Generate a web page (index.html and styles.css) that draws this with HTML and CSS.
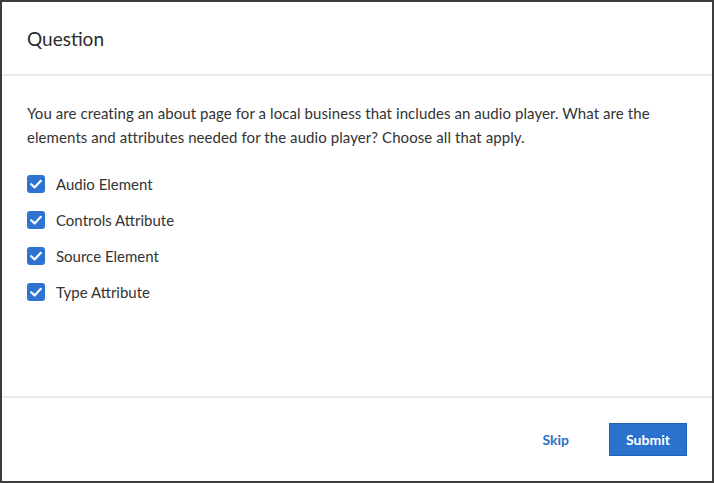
FILE: index.html
```html
<!DOCTYPE html>
<html>
<head>
<meta charset="utf-8">
<link rel="stylesheet" href="styles.css">
</head>
<body>
<div class="dialog">
  <div class="header"><h1 class="title">Question</h1></div>
  <div class="content">
    <p class="prompt">You are creating an about page for a local business that includes an audio player. What are the elements and attributes needed for the audio player? Choose all that apply.</p>
    <ul class="options">
      <li class="option"><span class="box"><svg viewBox="0 0 18 18" width="18" height="18"><path d="M4.2 9.2 L7.6 12.4 L13.8 5.8" fill="none" stroke="#fff" stroke-width="2.2" stroke-linecap="round" stroke-linejoin="round"/></svg></span><span class="label">Audio Element</span></li>
      <li class="option"><span class="box"><svg viewBox="0 0 18 18" width="18" height="18"><path d="M4.2 9.2 L7.6 12.4 L13.8 5.8" fill="none" stroke="#fff" stroke-width="2.2" stroke-linecap="round" stroke-linejoin="round"/></svg></span><span class="label">Controls Attribute</span></li>
      <li class="option"><span class="box"><svg viewBox="0 0 18 18" width="18" height="18"><path d="M4.2 9.2 L7.6 12.4 L13.8 5.8" fill="none" stroke="#fff" stroke-width="2.2" stroke-linecap="round" stroke-linejoin="round"/></svg></span><span class="label">Source Element</span></li>
      <li class="option"><span class="box"><svg viewBox="0 0 18 18" width="18" height="18"><path d="M4.2 9.2 L7.6 12.4 L13.8 5.8" fill="none" stroke="#fff" stroke-width="2.2" stroke-linecap="round" stroke-linejoin="round"/></svg></span><span class="label">Type Attribute</span></li>
    </ul>
  </div>
  <div class="footer">
    <button class="btn btn-link">Skip</button>
    <button class="btn btn-primary">Submit</button>
  </div>
</div>
</body>
</html>
```
FILE: styles.css
```css
html, body {
  margin: 0;
  padding: 0;
  height: 100%;
}
body {
  background: #3c3c3c;
  font-family: "Lato", "Liberation Sans", sans-serif;
  color: #333;
}
.dialog {
  box-sizing: border-box;
  margin: 2px 2px 2px 2px;
  height: 479px;
  background: #fff;
  display: flex;
  flex-direction: column;
}
.header {
  height: 72px;
  border-bottom: 2px solid #ebebeb;
  display: flex;
  align-items: center;
  padding: 0 25px;
}
.title {
  margin: 0;
  font-size: 19px;
  font-weight: 400;
  color: #2b2b2b;
}
.content {
  flex: 1;
  padding: 25px 25px 0 25px;
}
.prompt {
  margin: 0;
  font-size: 15px;
  line-height: 24px;
  letter-spacing: 0.08px;
  color: #333;
}
.options {
  list-style: none;
  margin: 26px 0 0 0;
  padding: 0;
  display: flex;
  flex-direction: column;
  gap: 18px;
}
.option {
  display: flex;
  align-items: center;
  height: 18px;
}
.box {
  width: 18px;
  height: 18px;
  border-radius: 3px;
  background: #2d73cf;
  display: flex;
  flex-shrink: 0;
}
.label {
  margin-left: 11px;
  font-size: 15px;
  color: #333;
}
.footer {
  height: 83px;
  border-top: 2px solid #ebebeb;
  display: flex;
  align-items: center;
  justify-content: flex-end;
  padding: 0 25px;
  gap: 40px;
}
.btn {
  font-family: inherit;
  font-size: 14px;
  font-weight: 700;
  border: none;
  cursor: pointer;
}
.btn-link {
  background: none;
  color: #2d6fc8;
  padding: 0;
}
.btn-primary {
  background: #2a72cd;
  color: #fff;
  width: 78px;
  height: 33px;
  border: 1px solid #1f62b8;
}
```
